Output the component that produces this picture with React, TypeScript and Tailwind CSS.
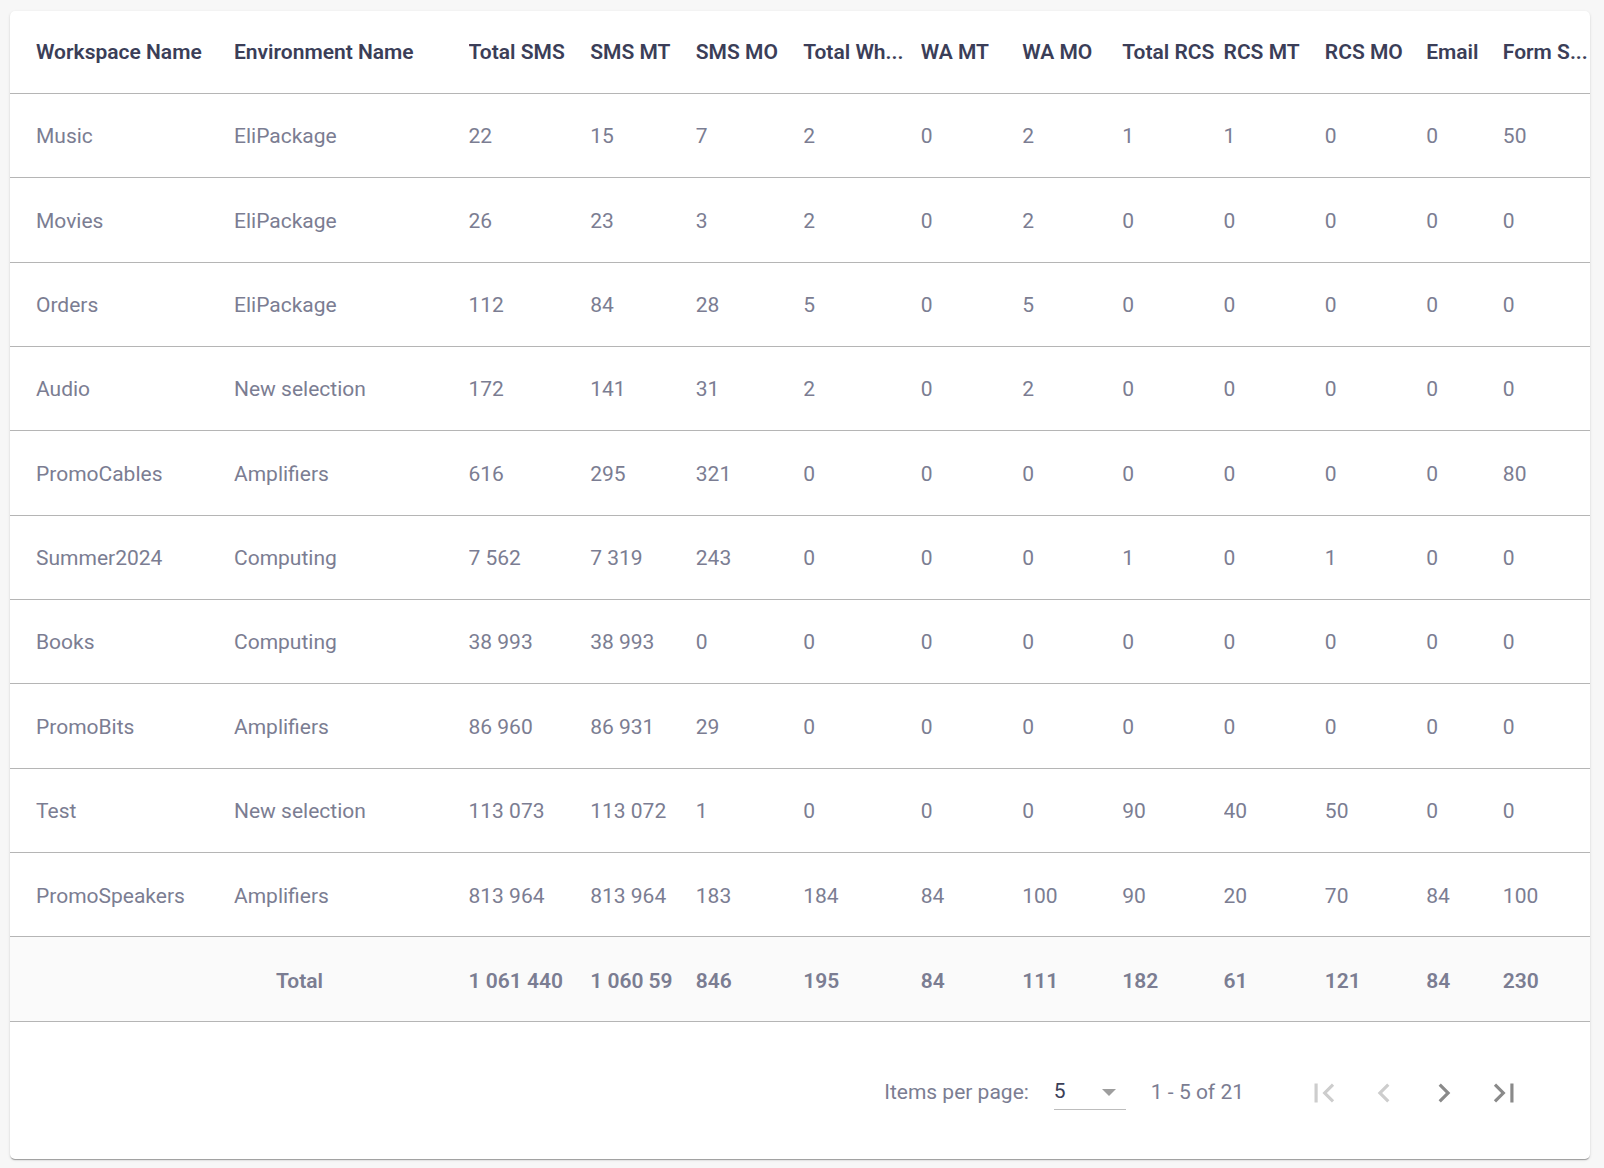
import React from 'react';

const columns = [
    'Workspace Name',
    'Environment Name',
    'Total SMS',
    'SMS MT',
    'SMS MO',
    'Total Wh...',
    'WA MT',
    'WA MO',
    'Total RCS',
    'RCS MT',
    'RCS MO',
    'Email',
    'Form S...',
];

const rows = [
    ['Music', 'EliPackage', '22', '15', '7', '2', '0', '2', '1', '1', '0', '0', '50'],
    ['Movies', 'EliPackage', '26', '23', '3', '2', '0', '2', '0', '0', '0', '0', '0'],
    ['Orders', 'EliPackage', '112', '84', '28', '5', '0', '5', '0', '0', '0', '0', '0'],
    ['Audio', 'New selection', '172', '141', '31', '2', '0', '2', '0', '0', '0', '0', '0'],
    ['PromoCables', 'Amplifiers', '616', '295', '321', '0', '0', '0', '0', '0', '0', '0', '80'],
    ['Summer2024', 'Computing', '7 562', '7 319', '243', '0', '0', '0', '1', '0', '1', '0', '0'],
    ['Books', 'Computing', '38 993', '38 993', '0', '0', '0', '0', '0', '0', '0', '0', '0'],
    ['PromoBits', 'Amplifiers', '86 960', '86 931', '29', '0', '0', '0', '0', '0', '0', '0', '0'],
    ['Test', 'New selection', '113 073', '113 072', '1', '0', '0', '0', '90', '40', '50', '0', '0'],
    ['PromoSpeakers', 'Amplifiers', '813 964', '813 964', '183', '184', '84', '100', '90', '20', '70', '84', '100'],
];

const totals = ['1 061 440', '1 060 59', '846', '195', '84', '111', '182', '61', '121', '84', '230'];

const gridCols =
    'grid grid-cols-[224px_234.5px_121.7px_105.6px_107.4px_117.6px_101.4px_100.1px_101.3px_101.3px_101.3px_76.7px_87.3px]';

function Cell({ children, first }: { children: React.ReactNode; first?: boolean }) {
    return (
        <div className={`flex items-center overflow-hidden whitespace-nowrap ${first ? 'pl-[26px]' : ''}`}>
            {children}
        </div>
    );
}

function PagerIcon({ d, enabled }: { d: string; enabled?: boolean }) {
    return (
        <button className="w-[60px] h-[60px] flex items-center justify-center">
            <svg viewBox="0 0 24 24" className={`w-[38px] h-[38px] ${enabled ? 'fill-[#8a8a8a]' : 'fill-[#cdcdcd]'}`}>
                <path d={d} />
            </svg>
        </button>
    );
}

export default function App() {
    return (
        <div className="min-h-screen bg-[#f7f7f7] pt-[11px] pl-[10px] font-['Roboto',sans-serif] text-[21px]">
            <div className="w-[1580px] h-[1148px] bg-white rounded-[5px] shadow-[0_2px_1px_-1px_rgba(0,0,0,0.2),0_1px_1px_0_rgba(0,0,0,0.14),0_1px_3px_0_rgba(0,0,0,0.12)] overflow-hidden">
                {/* header */}
                <div className={`${gridCols} h-[83px] pt-[2px] border-b border-[#b5b5b5] font-semibold text-[#3b3e58]`}>
                    {columns.map((c, i) => (
                        <Cell key={c} first={i === 0}>
                            {c}
                        </Cell>
                    ))}
                </div>

                {rows.map((r) => (
                    <div key={r[0]} className={`${gridCols} h-[84.35px] pt-[3px] border-b border-[#b5b5b5] text-[#7b7d92]`}>
                        {r.map((v, i) => (
                            <Cell key={i} first={i === 0}>
                                {v}
                            </Cell>
                        ))}
                    </div>
                ))}

                {/* totals */}
                <div className={`${gridCols} h-[84.35px] pt-[5px] border-b border-[#b5b5b5] bg-[#fafafa] font-semibold text-[#7b7d92]`}>
                    <Cell first>{''}</Cell>
                    <div className="flex items-center pl-[42px]">Total</div>
                    {totals.map((v, i) => (
                        <Cell key={i}>{v}</Cell>
                    ))}
                </div>

                {/* paginator */}
                <div className="h-[138px] flex items-center justify-end pr-[56px] pt-[4px] text-[#7b7d92]">
                    <span>Items per page:</span>
                    <div className="ml-[25px] w-[72px] h-[36px] flex items-center justify-between border-b-[1.5px] border-[#bdbdbd] text-[#3b3e58] relative top-[-1px]">
                        <span>5</span>
                        <span className="w-0 h-0 mr-[10px] mt-[2px] border-l-[7px] border-r-[7px] border-t-[7px] border-l-transparent border-r-transparent border-t-[#9e9e9e]" />
                    </div>
                    <span className="ml-[25px]">1 - 5 of 21</span>
                    <div className="ml-[50px] flex">
                        <PagerIcon d="M18.41 16.59L13.82 12l4.59-4.59L17 6l-6 6 6 6zM6 6h2v12H6z" />
                        <PagerIcon d="M15.41 7.41L14 6l-6 6 6 6 1.41-1.41L10.83 12z" />
                        <PagerIcon enabled d="M10 6L8.59 7.41 13.17 12l-4.58 4.59L10 18l6-6z" />
                        <PagerIcon enabled d="M5.59 7.41L10.18 12l-4.59 4.59L7 18l6-6-6-6zM16 6h2v12h-2z" />
                    </div>
                </div>
            </div>
        </div>
    );
}
